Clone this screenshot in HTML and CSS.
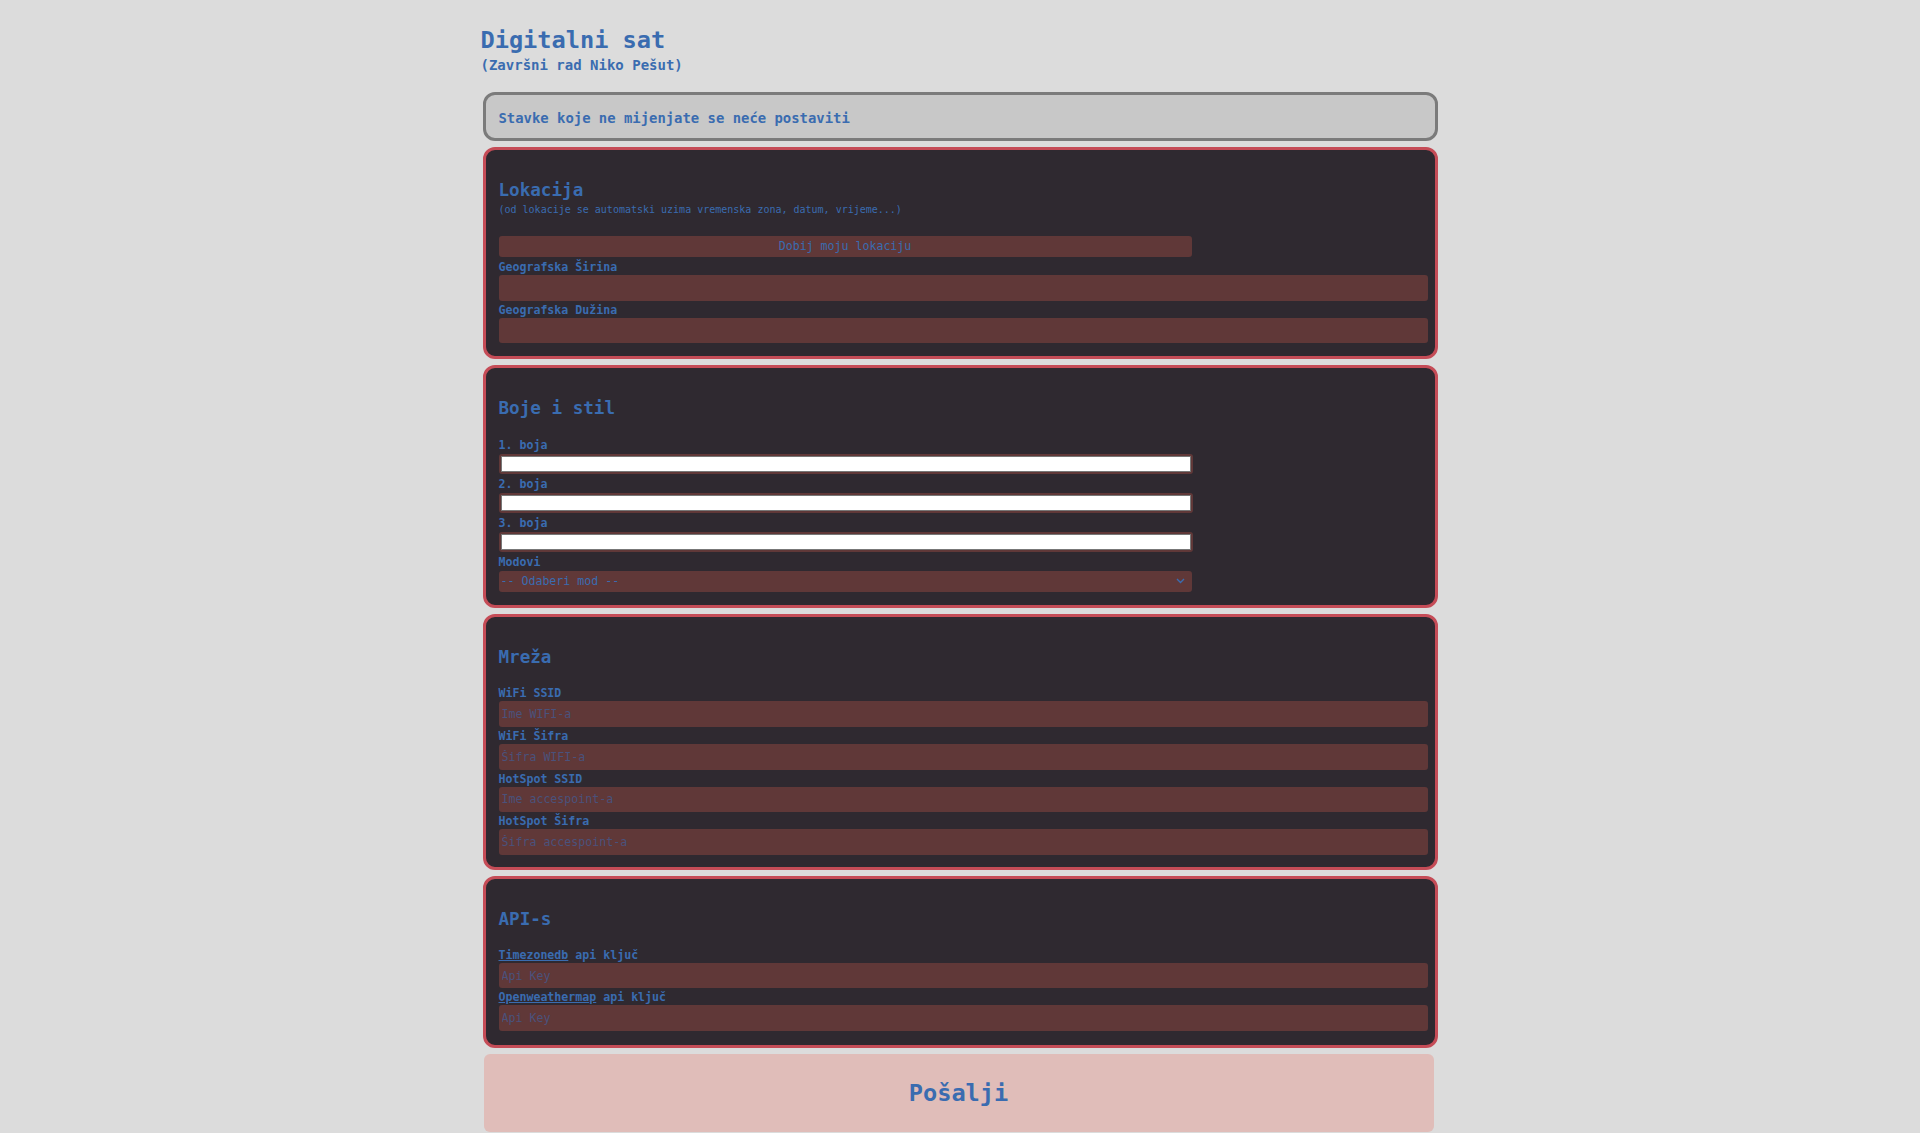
FILE: index.html
```html
<!DOCTYPE html>
<html lang="hr">
<head>
<meta charset="utf-8">
<title>Digitalni sat</title>
<link rel="stylesheet" href="styles.css">
</head>
<body>
<main class="page">
  <header class="top">
    <h1 class="title">Digitalni sat</h1>
    <p class="subtitle">(Završni rad Niko Pešut)</p>
  </header>
  <div class="notice">Stavke koje ne mijenjate se neće postaviti</div>
  <form class="form">
    <section class="card card-loc">
      <div class="card-head">
        <h2 class="card-title">Lokacija</h2>
        <p class="card-note">(od lokacije se automatski uzima vremenska zona, datum, vrijeme...)</p>
      </div>
      <button type="button" class="btn-loc">Dobij moju lokaciju</button>
      <label class="field-label" for="lat">Geografska Širina</label>
      <input class="text-in" id="lat" type="text">
      <label class="field-label" for="lon">Geografska Dužina</label>
      <input class="text-in" id="lon" type="text">
    </section>

    <section class="card">
      <div class="card-head">
        <h2 class="card-title">Boje i stil</h2>
      </div>
      <label class="field-label" for="c1">1. boja</label>
      <input class="color-in" id="c1" type="color" value="#ffffff">
      <label class="field-label" for="c2">2. boja</label>
      <input class="color-in" id="c2" type="color" value="#ffffff">
      <label class="field-label" for="c3">3. boja</label>
      <input class="color-in" id="c3" type="color" value="#ffffff">
      <label class="field-label" for="mod">Modovi</label>
      <div class="select-wrap">
        <select class="select-in" id="mod">
          <option>-- Odaberi mod --</option>
        </select>
        <svg class="select-arrow" width="9" height="6" viewBox="0 0 9 6"><path d="M1 1 L4.5 4.5 L8 1" fill="none" stroke="#3a6cb0" stroke-width="1.4"/></svg>
      </div>
    </section>

    <section class="card">
      <div class="card-head">
        <h2 class="card-title">Mreža</h2>
      </div>
      <label class="field-label" for="ssid">WiFi SSID</label>
      <input class="text-in" id="ssid" type="text" placeholder="Ime WIFI-a">
      <label class="field-label" for="pass">WiFi Šifra</label>
      <input class="text-in" id="pass" type="text" placeholder="Šifra WIFI-a">
      <label class="field-label" for="hssid">HotSpot SSID</label>
      <input class="text-in" id="hssid" type="text" placeholder="Ime accespoint-a">
      <label class="field-label" for="hpass">HotSpot Šifra</label>
      <input class="text-in" id="hpass" type="text" placeholder="Šifra accespoint-a">
    </section>

    <section class="card card-api">
      <div class="card-head card-head-tight">
        <h2 class="card-title">API-s</h2>
      </div>
      <label class="field-label" for="tz"><a class="link" href="#">Timezonedb</a> api ključ</label>
      <input class="text-in" id="tz" type="text" placeholder="Api Key">
      <label class="field-label" for="ow"><a class="link" href="#">Openweathermap</a> api ključ</label>
      <input class="text-in" id="ow" type="text" placeholder="Api Key">
    </section>

    <button type="submit" class="submit">Pošalji</button>
  </form>
</main>
</body>
</html>
```

FILE: styles.css
```css
html, body {
  margin: 0;
  padding: 0;
}

body {
  background: #dcdcdc;
  font-family: "DejaVu Sans Mono", "Liberation Mono", monospace;
  color: #3a6cb0;
}

.page {
  width: 955px;
  margin: 0 auto;
}

.top {
  padding-top: 26px;
  margin-left: -2px;
}

.title {
  margin: 0;
  font-size: 23.6px;
  line-height: 28px;
  font-weight: bold;
}

.subtitle {
  margin: 3px 0 0;
  font-size: 14px;
  line-height: 16px;
  font-weight: bold;
}

.notice {
  margin-top: 19px;
  height: 49px;
  box-sizing: border-box;
  border: 3px solid #7b7b7b;
  border-radius: 12px;
  background: #c8c8c8;
  padding: 3px 0 0 13px;
  display: flex;
  align-items: center;
  font-size: 13.9px;
  font-weight: bold;
}

.form {
  display: flex;
  flex-direction: column;
  gap: 6px;
  margin: 6px 0 0;
}

.card {
  border: 3px solid #c54c57;
  border-radius: 12px;
  background: #2f2930;
  padding: 30.4px 7px 12px 13px;
  display: flex;
  flex-direction: column;
  align-items: stretch;
}

.card-loc {
  padding-bottom: 12.6px;
}

.card-api {
  padding-bottom: 13.5px;
}

.card-head {
  margin-bottom: 19.3px;
}

.card-head-tight {
  margin-bottom: 18.6px;
}

.card-title {
  margin: 0;
  font-size: 17.6px;
  line-height: 20px;
  font-weight: bold;
}

.card-note {
  margin: 4px 0 0;
  font-size: 10px;
  line-height: 12px;
}

.field-label {
  display: block;
  margin-top: 2px;
  font-size: 11.6px;
  line-height: 14px;
  font-weight: bold;
}

.card-head + .field-label {
  margin-top: 0;
}

.link {
  color: #3a6cb0;
  text-decoration: underline;
}

.text-in {
  margin: 1px 0 0;
  height: 25.6px;
  width: 100%;
  box-sizing: border-box;
  border: none;
  border-radius: 3px;
  background: #603838;
  padding: 0 3px;
  font-family: "DejaVu Sans Mono", monospace;
  font-size: 11.6px;
  color: #3a6cb0;
  outline: none;
}

.text-in::placeholder {
  color: #4a527c;
  opacity: 1;
}

.btn-loc {
  align-self: flex-start;
  width: 693px;
  height: 21.5px;
  margin-bottom: 1px;
  border: none;
  border-radius: 3px;
  background: #603838;
  padding: 0;
  font-family: "DejaVu Sans Mono", monospace;
  font-size: 11.6px;
  color: #3a6cb0;
}

.color-in {
  -webkit-appearance: none;
  appearance: none;
  align-self: flex-start;
  width: 694px;
  height: 20.4px;
  margin: 2px 0 0.6px;
  padding: 2px;
  box-sizing: border-box;
  border: none;
  border-radius: 3px;
  background: #603838;
}

.color-in::-webkit-color-swatch-wrapper {
  padding: 0;
}

.color-in::-webkit-color-swatch {
  border: 1px solid #777777;
  border-radius: 0;
}

.select-wrap {
  position: relative;
  align-self: flex-start;
  width: 693px;
  height: 20.7px;
  margin: 1.8px 0 1.7px;
}

.select-in {
  -webkit-appearance: none;
  appearance: none;
  width: 100%;
  height: 100%;
  border: none;
  border-radius: 3px;
  background: #603838;
  padding: 0 2px;
  font-family: "DejaVu Sans Mono", monospace;
  font-size: 11.6px;
  color: #3a6cb0;
  outline: none;
}

.select-arrow {
  position: absolute;
  right: 7px;
  top: 8px;
  pointer-events: none;
}

.submit {
  margin: 0 4px 0 1px;
  height: 78px;
  border: none;
  border-radius: 6px;
  background: #e0bdb9;
  font-family: "DejaVu Sans Mono", monospace;
  font-size: 23.6px;
  font-weight: bold;
  color: #3a6cb0;
  padding: 0;
}
```
